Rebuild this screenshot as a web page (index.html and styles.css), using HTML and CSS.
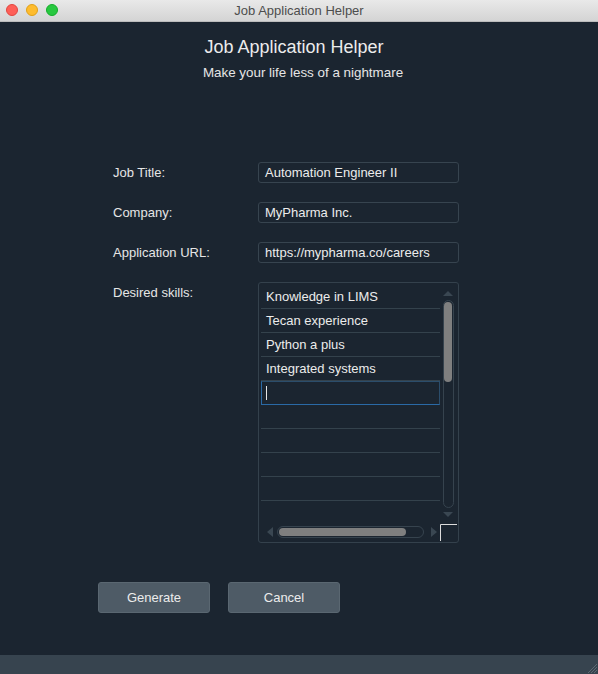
FILE: index.html
```html
<!DOCTYPE html>
<html lang="en">
<head>
<meta charset="utf-8">
<title>Job Application Helper</title>
<link rel="stylesheet" href="styles.css">
</head>
<body>
<div class="window">
  <header class="titlebar">
    <div class="lights">
      <span class="light red"></span>
      <span class="light yellow"></span>
      <span class="light green"></span>
    </div>
    <div class="wintitle">Job Application Helper</div>
  </header>
  <main class="content">
    <h1 class="heading">Job Application Helper</h1>
    <p class="subtitle">Make your life less of a nightmare</p>
    <form class="form">
      <label class="label">Job Title:</label>
      <div class="input">Automation Engineer II</div>
      <label class="label">Company:</label>
      <div class="input">MyPharma Inc.</div>
      <label class="label">Application URL:</label>
      <div class="input">https://mypharma.co/careers</div>
      <label class="label">Desired skills:</label>
      <div class="listbox">
        <div class="rows">
          <div class="row">Knowledge in LIMS</div>
          <div class="row">Tecan experience</div>
          <div class="row">Python a plus</div>
          <div class="row">Integrated systems</div>
          <div class="row edit"><span class="caret"></span></div>
          <div class="row"></div>
          <div class="row"></div>
          <div class="row"></div>
          <div class="row"></div>
          <div class="row"></div>
        </div>
        <svg class="vscroll" width="18" height="237" viewBox="0 0 18 237">
          <polygon points="3,11 8,6 13,11" fill="#3a4752"/>
          <rect x="3.5" y="15.5" width="10" height="207" rx="5" fill="none" stroke="#36434e"/>
          <rect x="4" y="17" width="8" height="80" rx="4" fill="#7f7f7f"/>
          <polygon points="3,227 13,227 8,232" fill="#3a4752"/>
        </svg>
        <svg class="hscroll" width="197" height="20" viewBox="0 0 197 20">
          <polygon points="12,5 12,15 6,10" fill="#3a4752"/>
          <rect x="16.5" y="4.5" width="146" height="11" rx="5.5" fill="none" stroke="#36434e"/>
          <rect x="18" y="6" width="127" height="8" rx="4" fill="#7f7f7f"/>
          <polygon points="170,5 170,15 176,10" fill="#3a4752"/>
          <path d="M179.5 19 V2.5 H196" fill="none" stroke="#dcdcdc"/>
        </svg>
      </div>
    </form>
    <div class="actions">
      <button class="btn" type="button">Generate</button>
      <button class="btn" type="button">Cancel</button>
    </div>
  </main>
  <footer class="statusbar">
    <svg class="grip" width="10" height="10" viewBox="0 0 10 10">
      <path d="M1 10 L10 1 M4 10 L10 4 M7 10 L10 7" stroke="#5d6973" stroke-width="1"/>
    </svg>
  </footer>
</div>
</body>
</html>
```

FILE: styles.css
```css
* { box-sizing: border-box; }
html, body { margin: 0; padding: 0; }
body {
  width: 598px;
  height: 674px;
  overflow: hidden;
  background: #1b2530;
  font-family: "Liberation Sans", Arial, sans-serif;
  color: #e6e6e6;
}
.window {
  display: flex;
  flex-direction: column;
  height: 674px;
}
.titlebar {
  position: relative;
  height: 22px;
  flex: none;
  background: linear-gradient(#e9e9e9, #d4d4d4);
  border-bottom: 1px solid #bcbcbc;
  display: flex;
  align-items: center;
  justify-content: center;
}
.lights {
  position: absolute;
  left: 6px;
  top: 4px;
  display: flex;
  gap: 8px;
}
.light {
  width: 12px;
  height: 12px;
  border-radius: 50%;
}
.red { background: #fe5f57; border: 1px solid #e2463f; }
.yellow { background: #febc2e; border: 1px solid #e1a116; }
.green { background: #28c840; border: 1px solid #14ae2a; }
.wintitle {
  font-size: 13px;
  color: #4d4d4d;
  line-height: 22px;
}
.content {
  flex: 1;
  display: flex;
  flex-direction: column;
  align-items: center;
  padding-top: 14px;
}
.heading {
  margin: 0;
  font-size: 18px;
  font-weight: normal;
  line-height: 22px;
  color: #ececec;
  transform: translateX(-5px);
}
.subtitle {
  margin: 7px 0 0;
  font-size: 13.4px;
  line-height: 16px;
  color: #e6e6e6;
  transform: translateX(4px);
}
.form {
  align-self: flex-start;
  margin: 81px 0 0 113px;
  display: grid;
  grid-template-columns: 145px 201px;
  row-gap: 19px;
  align-items: start;
}
.label {
  font-size: 13px;
  line-height: 21px;
  color: #e6e6e6;
}
.input {
  height: 21px;
  border: 1px solid #37444f;
  border-radius: 3px;
  padding-left: 6px;
  font-size: 13px;
  line-height: 19px;
  color: #ececec;
  white-space: nowrap;
  overflow: hidden;
}
.listbox {
  height: 261px;
  border: 1px solid #34414c;
  border-radius: 3px;
  padding: 2px 0 0 2px;
  display: grid;
  grid-template-columns: 179px 18px;
  grid-template-rows: 237px 20px;
}
.rows {
  overflow: hidden;
}
.row {
  height: 24px;
  border-bottom: 1px solid #34424c;
  padding-left: 5px;
  font-size: 13px;
  line-height: 23px;
  color: #ececec;
}
.row.edit {
  border: 1px solid #2b4d6b;
  border-left-color: #2a6aa6;
  border-bottom-color: #2a6aa6;
  padding-left: 4px;
  display: flex;
  align-items: center;
}
.caret {
  width: 1px;
  height: 14px;
  background: #e6e6e6;
}
.vscroll { display: block; }
.hscroll {
  display: block;
  grid-column: 1 / -1;
}
.actions {
  align-self: flex-start;
  margin: 39px 0 0 98px;
  display: flex;
  gap: 18px;
}
.btn {
  width: 112px;
  height: 31px;
  background: #4e5b66;
  border: 1px solid #5a6771;
  border-radius: 3px;
  color: #ececec;
  font-family: "Liberation Sans", Arial, sans-serif;
  font-size: 13px;
  padding: 0;
}
.statusbar {
  height: 19px;
  flex: none;
  background: #37444f;
  display: flex;
  justify-content: flex-end;
  align-items: flex-end;
  padding: 0 1px 1px 0;
}
.grip { display: block; }
```
